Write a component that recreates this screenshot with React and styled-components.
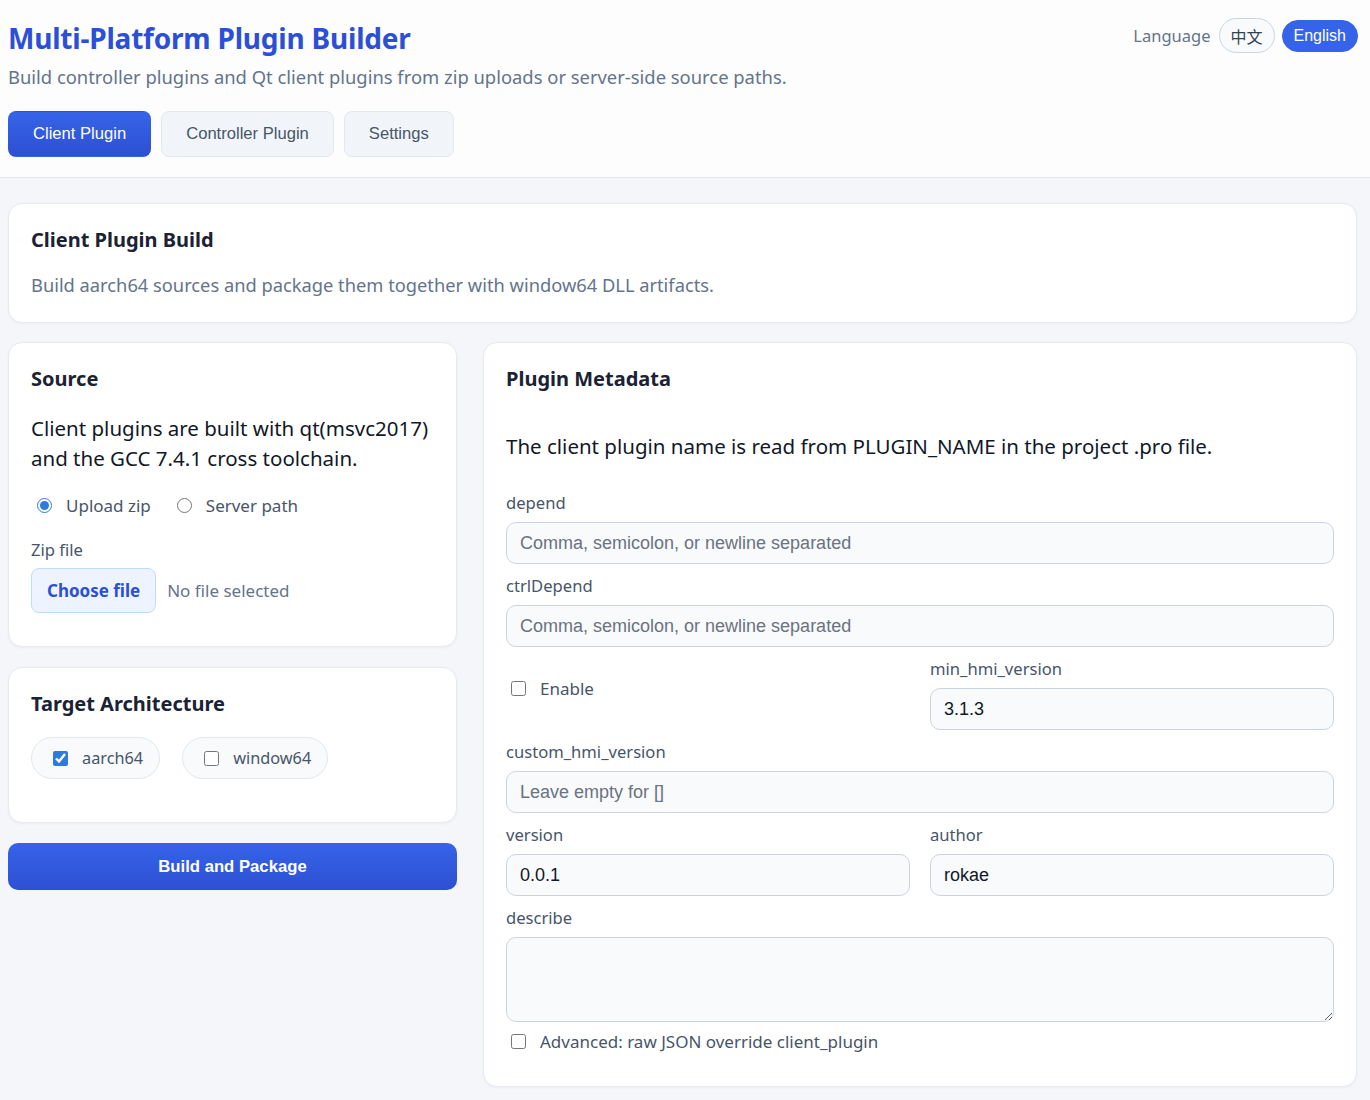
import React, { useState } from "react";
import styled, { createGlobalStyle } from "styled-components";

const GlobalStyle = createGlobalStyle`
  * { box-sizing: border-box; }
  html, body { margin: 0; padding: 0; }
  body {
    background: #f4f6fa;
    font-family: "Noto Sans", "Open Sans", sans-serif;
    color: #1e293b;
  }
`;

const uiFont = `"Liberation Sans", Arial, sans-serif`;

const Header = styled.header`
  background: #fdfdfe;
  border-bottom: 1px solid #e2e8f0;
  padding: 14px 12px 20px 8px;
  display: flex;
  justify-content: space-between;
  align-items: flex-start;
`;

const TitleBlock = styled.div`
  display: flex;
  flex-direction: column;
`;

const AppTitle = styled.h1`
  margin: 6px 0 0;
  font-size: 28px;
  line-height: 36px;
  font-weight: 700;
  color: #2b4fd6;
  letter-spacing: -0.2px;
`;

const AppSubtitle = styled.p`
  margin: 8px 0 0;
  font-size: 18.4px;
  line-height: 26px;
  color: #64748b;
`;

const Tabs = styled.nav`
  display: flex;
  gap: 10px;
  margin-top: 21px;
`;

const Tab = styled.button`
  height: 46px;
  padding: 0 24px;
  border-radius: 8px;
  font-family: ${uiFont};
  font-size: 16.6px;
  cursor: pointer;
  border: 1px solid ${(p) => (p.$active ? "transparent" : "#e2e8f0")};
  background: ${(p) =>
    p.$active ? "linear-gradient(180deg, #3564e8 0%, #2e4fd3 100%)" : "#f1f5f9"};
  color: ${(p) => (p.$active ? "#ffffff" : "#475569")};
`;

const LangBar = styled.div`
  display: flex;
  align-items: center;
  gap: 7px;
  margin-top: 4px;
`;

const LangLabel = styled.span`
  font-size: 16.5px;
  color: #64748b;
  margin-right: 1px;
`;

const LangPill = styled.button`
  height: ${(p) => (p.$active ? "32px" : "35px")};
  padding: 0 11px;
  border-radius: 999px;
  font-family: ${(p) => (p.$active ? uiFont : `"Noto Sans CJK SC", sans-serif`)};
  font-size: 16px;
  cursor: pointer;
  border: 1px solid ${(p) => (p.$active ? "#3563e9" : "#cbd5e1")};
  background: ${(p) => (p.$active ? "#3563e9" : "#f8fafc")};
  color: ${(p) => (p.$active ? "#ffffff" : "#334155")};
`;

const Main = styled.main`
  padding: 25px 13px 12px 8px;
  display: flex;
  flex-direction: column;
  gap: 19px;
`;

const Card = styled.section`
  background: #ffffff;
  border: 1px solid #e5e9f0;
  border-radius: 14px;
  box-shadow: 0 1px 3px rgba(15, 23, 42, 0.04);
  padding: ${(p) => p.$pad || "22px 22px 28px"};
  display: flex;
  flex-direction: column;
`;

const CardTitle = styled.h2`
  margin: 0;
  font-size: 20px;
  line-height: 28px;
  font-weight: 700;
  color: #1a2233;
`;

const CardDesc = styled.p`
  margin: 18px 0 0;
  font-size: 18.3px;
  line-height: 26px;
  color: #64748b;
`;

const Columns = styled.div`
  display: grid;
  grid-template-columns: 449px 1fr;
  gap: 26px;
  align-items: start;
`;

const LeftCol = styled.div`
  display: flex;
  flex-direction: column;
  gap: 20px;
`;

const Lead = styled.p`
  margin: ${(p) => p.$margin || "20px 0 0"};
  font-size: 20.5px;
  line-height: 30px;
  color: #111827;
`;

const RadioRow = styled.div`
  display: flex;
  gap: 26px;
  margin-top: 21px;
  padding-left: 6px;
`;

const Choice = styled.label`
  display: inline-flex;
  align-items: center;
  gap: 14px;
  font-size: 17px;
  color: #475569;
  cursor: pointer;

  input {
    margin: 0;
    width: 15px;
    height: 15px;
    accent-color: #2f7bd9;
  }
`;

const FieldLabel = styled.label`
  display: block;
  font-size: 16.6px;
  line-height: 22px;
  color: #475569;
  margin-bottom: ${(p) => p.$gap || "8px"};
`;

const ZipLabel = styled(FieldLabel)`
  margin-top: 22px;
`;

const FileRow = styled.div`
  display: flex;
  align-items: center;
  gap: 11px;
`;

const FileButton = styled.button`
  height: 45px;
  padding: 0 15px;
  border-radius: 8px;
  border: 1px solid #bfdbfe;
  background: #eef4ff;
  color: #2b4fd6;
  font-family: "Noto Sans", sans-serif;
  font-size: 17px;
  font-weight: 700;
  cursor: pointer;
`;

const FileHint = styled.span`
  font-size: 17px;
  color: #64748b;
`;

const ChipRow = styled.div`
  display: flex;
  gap: 22px;
  margin-top: 19px;
`;

const Chip = styled.label`
  display: inline-flex;
  align-items: center;
  gap: 14px;
  height: 42px;
  padding: 0 16px 0 21px;
  border-radius: 999px;
  border: 1px solid #e2e8f0;
  background: #f8fafc;
  font-size: 16.3px;
  color: #475569;
  cursor: pointer;

  input {
    margin: 0;
    width: 15px;
    height: 15px;
    accent-color: #2f7bd9;
  }
`;

const PrimaryButton = styled.button`
  height: 47px;
  width: 100%;
  border: none;
  border-radius: 10px;
  background: linear-gradient(180deg, #3564e8 0%, #2e4fd3 100%);
  color: #ffffff;
  font-family: ${uiFont};
  font-size: 16.7px;
  font-weight: 700;
  cursor: pointer;
`;

const Form = styled.div`
  display: grid;
  grid-template-columns: 1fr 1fr;
  column-gap: 20px;
  row-gap: 11px;
  margin-top: 31px;
`;

const Field = styled.div`
  grid-column: ${(p) => (p.$wide ? "1 / -1" : "auto")};
  display: flex;
  flex-direction: column;
`;

const inputBase = `
  width: 100%;
  border: 1px solid #cbd5e1;
  border-radius: 10px;
  background: #f8fafc;
  font-family: "Liberation Sans", Arial, sans-serif;
  font-size: 18px;
  color: #111827;
  padding: 0 13px;
  outline: none;

  &::placeholder {
    color: #6b7280;
  }
`;

const Input = styled.input`
  ${inputBase}
  height: 42px;
`;

const TextArea = styled.textarea`
  ${inputBase}
  height: 85px;
  padding: 10px 13px;
  resize: vertical;
  display: block;
`;

const InlineCheck = styled(Choice)`
  align-self: center;
  padding-left: 5px;
  margin-bottom: 12px;
`;

const AdvancedCheck = styled(Choice)`
  grid-column: 1 / -1;
  padding-left: 5px;
  margin-top: -3px;
`;

export default function App() {
  const [mode, setMode] = useState("zip");
  const [arch, setArch] = useState({ aarch64: true, window64: false });

  return (
    <>
      <GlobalStyle />
      <Header>
        <TitleBlock>
          <AppTitle>Multi-Platform Plugin Builder</AppTitle>
          <AppSubtitle>
            Build controller plugins and Qt client plugins from zip uploads or
            server-side source paths.
          </AppSubtitle>
          <Tabs>
            <Tab $active>Client Plugin</Tab>
            <Tab>Controller Plugin</Tab>
            <Tab>Settings</Tab>
          </Tabs>
        </TitleBlock>
        <LangBar>
          <LangLabel>Language</LangLabel>
          <LangPill>中文</LangPill>
          <LangPill $active>English</LangPill>
        </LangBar>
      </Header>

      <Main>
        <Card $pad="22px 22px 24px">
          <CardTitle>Client Plugin Build</CardTitle>
          <CardDesc>
            Build aarch64 sources and package them together with window64 DLL
            artifacts.
          </CardDesc>
        </Card>

        <Columns>
          <LeftCol>
            <Card $pad="22px 22px 33px">
              <CardTitle>Source</CardTitle>
              <Lead $margin="20px 0 0">
                Client plugins are built with qt(msvc2017) and the GCC 7.4.1
                cross toolchain.
              </Lead>
              <RadioRow>
                <Choice>
                  <input
                    type="radio"
                    name="mode"
                    checked={mode === "zip"}
                    onChange={() => setMode("zip")}
                  />
                  Upload zip
                </Choice>
                <Choice>
                  <input
                    type="radio"
                    name="mode"
                    checked={mode === "path"}
                    onChange={() => setMode("path")}
                  />
                  Server path
                </Choice>
              </RadioRow>
              <ZipLabel $gap="7px">Zip file</ZipLabel>
              <FileRow>
                <FileButton>Choose file</FileButton>
                <FileHint>No file selected</FileHint>
              </FileRow>
            </Card>

            <Card $pad="22px 22px 43px">
              <CardTitle>Target Architecture</CardTitle>
              <ChipRow>
                {["aarch64", "window64"].map((a) => (
                  <Chip key={a}>
                    <input
                      type="checkbox"
                      checked={arch[a]}
                      onChange={() => setArch({ ...arch, [a]: !arch[a] })}
                    />
                    {a}
                  </Chip>
                ))}
              </ChipRow>
            </Card>

            <PrimaryButton>Build and Package</PrimaryButton>
          </LeftCol>

          <Card $pad="22px 22px 33px">
            <CardTitle>Plugin Metadata</CardTitle>
            <Lead $margin="38px 0 0">
              The client plugin name is read from PLUGIN_NAME in the project .pro
              file.
            </Lead>
            <Form>
              <Field $wide>
                <FieldLabel>depend</FieldLabel>
                <Input placeholder="Comma, semicolon, or newline separated" />
              </Field>
              <Field $wide>
                <FieldLabel>ctrlDepend</FieldLabel>
                <Input placeholder="Comma, semicolon, or newline separated" />
              </Field>
              <InlineCheck>
                <input type="checkbox" />
                Enable
              </InlineCheck>
              <Field>
                <FieldLabel>min_hmi_version</FieldLabel>
                <Input defaultValue="3.1.3" />
              </Field>
              <Field $wide>
                <FieldLabel>custom_hmi_version</FieldLabel>
                <Input placeholder="Leave empty for []" />
              </Field>
              <Field>
                <FieldLabel>version</FieldLabel>
                <Input defaultValue="0.0.1" />
              </Field>
              <Field>
                <FieldLabel>author</FieldLabel>
                <Input defaultValue="rokae" />
              </Field>
              <Field $wide>
                <FieldLabel>describe</FieldLabel>
                <TextArea />
              </Field>
              <AdvancedCheck>
                <input type="checkbox" />
                Advanced: raw JSON override client_plugin
              </AdvancedCheck>
            </Form>
          </Card>
        </Columns>
      </Main>
    </>
  );
}
